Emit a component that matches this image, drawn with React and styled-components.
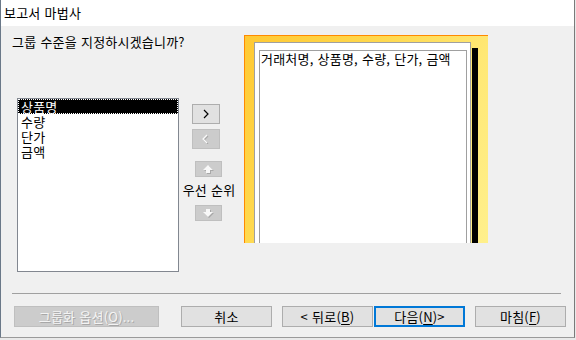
import React from 'react'
import styled, { createGlobalStyle } from 'styled-components'

/**** Styles ****/
const Global = createGlobalStyle`
  html, body {
    margin: 0;
    padding: 0;
    background: #dcdcdc;
  }
  body {
    font-family: "Noto Sans CJK KR", "Noto Sans", sans-serif;
    font-size: 13px;
    letter-spacing: 0.2px;
    word-spacing: 1px;
    color: #000;
  }
`

const Screen = styled.div`
  width: 576px;
  height: 340px;
  overflow: hidden;
  background: #e9e9e9;
`

const Window = styled.div`
  width: 573px;
  height: 337px;
  display: flex;
  flex-direction: column;
  background: #f0f0f0;
  border-left: 1px solid #6a7888;
  border-right: 1px solid #7a7a7a;
  border-bottom: 1px solid #9a9a9a;
`

const TitleBar = styled.div`
  height: 26px;
  flex-shrink: 0;
  background: #fff;
  display: flex;
  align-items: center;
  padding-left: 3px;
  line-height: 14px;
`

const Content = styled.div`
  height: 258px;
  padding-top: 9px;
  display: flex;
  flex-shrink: 0;
`

const LeftPane = styled.div`
  width: 243px;
  padding-left: 11px;
  box-sizing: border-box;
  display: flex;
  flex-direction: column;
`

const Prompt = styled.div`
  line-height: 14px;
  height: 14px;
  white-space: nowrap;
`

const ListRow = styled.div`
  display: flex;
  margin-top: 49px;
  margin-left: 5px;
`

const ListBox = styled.div`
  width: 162px;
  height: 174px;
  box-sizing: border-box;
  background: #fff;
  border: 1px solid #828790;
`

const ListItem = styled.div`
  height: 15px;
  line-height: 15px;
  padding-left: 3px;
  box-sizing: border-box;
  background: ${p => (p.$selected ? '#000' : 'transparent')};
  color: ${p => (p.$selected ? '#fff' : '#000')};
  outline: ${p => (p.$selected ? '1px dotted #fff' : 'none')};
  outline-offset: -1px;
`

const Controls = styled.div`
  width: 50px;
  margin-left: 5px;
  display: flex;
  flex-direction: column;
  align-items: center;
  padding-top: 6px;
`

const SmallButton = styled.div`
  width: 28px;
  height: 20px;
  box-sizing: border-box;
  border: 1px solid ${p => (p.$disabled ? '#bfbfbf' : '#adadad')};
  background: ${p => (p.$disabled ? '#cccccc' : '#e1e1e1')};
  display: flex;
  align-items: center;
  justify-content: center;
  margin-bottom: 5px;
  margin-left: ${p => p.$shift || 0}px;
`

const ArrowButton = styled(SmallButton)`
  width: 27px;
  height: 16px;
  margin-bottom: 0;
`

const Priority = styled.div`
  line-height: 14px;
  margin: 6px 0 8px;
  white-space: nowrap;
`

const Preview = styled.div`
  width: 244px;
  height: 208px;
  box-sizing: border-box;
  border-top: 1px solid #ff8a00;
  border-left: 1px solid #ff8a00;
  background: linear-gradient(125deg, #ffc933 0%, #ffd84d 35%, #ffe875 65%, #fff08c 100%);
  padding: 6px 0 0 9px;
  display: flex;
`

const Page = styled.div`
  width: 217px;
  box-sizing: border-box;
  background: #fff;
  border: 1px solid #a0a0a0;
  border-bottom: none;
  padding: 7px 3px 0 4px;
  display: flex;
`

const PageInner = styled.div`
  flex: 1;
  border: 1px solid #a0a0a0;
  border-bottom: none;
  padding: 1px 1px;
  line-height: 14px;
  white-space: nowrap;
`

const Shadow = styled.div`
  width: 6px;
  margin: 6px 0 0 1px;
  background: #000;
`

const Separator = styled.div`
  height: 1px;
  background: #a0a0a0;
  margin: 0 13px 0 11px;
  flex-shrink: 0;
`

const Footer = styled.div`
  display: flex;
  padding: 12px 0 0 13px;
`

const Button = styled.div`
  width: ${p => p.$w || 91}px;
  height: 21px;
  box-sizing: border-box;
  margin-left: ${p => p.$gap || 0}px;
  border: ${p => (p.$default ? '2px solid #0078d7' : `1px solid ${p.$disabled ? '#bfbfbf' : '#adadad'}`)};
  background: ${p => (p.$disabled ? '#cccccc' : '#e1e1e1')};
  color: ${p => (p.$disabled ? '#f4f4f4' : '#000')};
  text-shadow: ${p => (p.$disabled ? '1px 1px 0 #a8a8a8' : 'none')};
  display: flex;
  align-items: center;
  justify-content: center;
  line-height: 14px;
  white-space: nowrap;
  u { text-decoration: underline; text-underline-offset: 2px; }
`

/**** Icons ****/
const Chevron = ({ dir, disabled }) => (
  <svg width="8" height="10" viewBox="0 0 8 10">
    {disabled && (
      <polyline points={dir === 'right' ? '3,2 7,6 3,10' : '6,2 2,6 6,10'} fill="none" stroke="#a8a8a8" strokeWidth="1.2" />
    )}
    <polyline
      points={dir === 'right' ? '2,1 6,5 2,9' : '5,1 1,5 5,9'}
      fill="none"
      stroke={disabled ? '#fafafa' : '#000'}
      strokeWidth="1.2"
    />
  </svg>
)

const Arrow = ({ up }) => {
  const pts = up ? '5,0 10,5 7,5 7,8 3,8 3,5 0,5' : '3,0 7,0 7,3 10,3 5,8 0,3 3,3'
  return (
    <svg width="11" height="9" viewBox="0 0 11 9">
      <polygon points={pts} transform="translate(1,1)" fill="#a8a8a8" />
      <polygon points={pts} fill="#f8f8f8" />
    </svg>
  )
}

/**** Component ****/
const items = ['상품명', '수량', '단가', '금액']

const App = () => {
  return (
    <>
      <Global />
      <Screen>
        <Window>
          <TitleBar>보고서 마법사</TitleBar>
          <Content>
            <LeftPane>
              <Prompt>그룹 수준을 지정하시겠습니까?</Prompt>
              <ListRow>
                <ListBox>
                  {items.map((item, key) => (
                    <ListItem key={key} $selected={key === 0}>{item}</ListItem>
                  ))}
                </ListBox>
                <Controls>
                  <SmallButton $shift={-7}>
                    <Chevron dir="right" />
                  </SmallButton>
                  <SmallButton $disabled $shift={-7}>
                    <Chevron dir="left" disabled />
                  </SmallButton>
                  <ArrowButton $disabled $shift={-2} style={{ marginTop: 7 }}>
                    <Arrow up />
                  </ArrowButton>
                  <Priority>우선 순위</Priority>
                  <ArrowButton $disabled $shift={-2}>
                    <Arrow />
                  </ArrowButton>
                </Controls>
              </ListRow>
            </LeftPane>
            <Preview>
              <Page>
                <PageInner>거래처명, 상품명, 수량, 단가, 금액</PageInner>
              </Page>
              <Shadow />
            </Preview>
          </Content>
          <Separator />
          <Footer>
            <Button $w={145} $disabled>그룹화 옵션(<u>O</u>)...</Button>
            <Button $gap={22}>취소</Button>
            <Button $gap={10}>&lt; 뒤로(<u>B</u>)</Button>
            <Button $gap={1} $default>다음(<u>N</u>)&gt;</Button>
            <Button $gap={10}>마침(<u>F</u>)</Button>
          </Footer>
        </Window>
      </Screen>
    </>
  )
}

export default App
